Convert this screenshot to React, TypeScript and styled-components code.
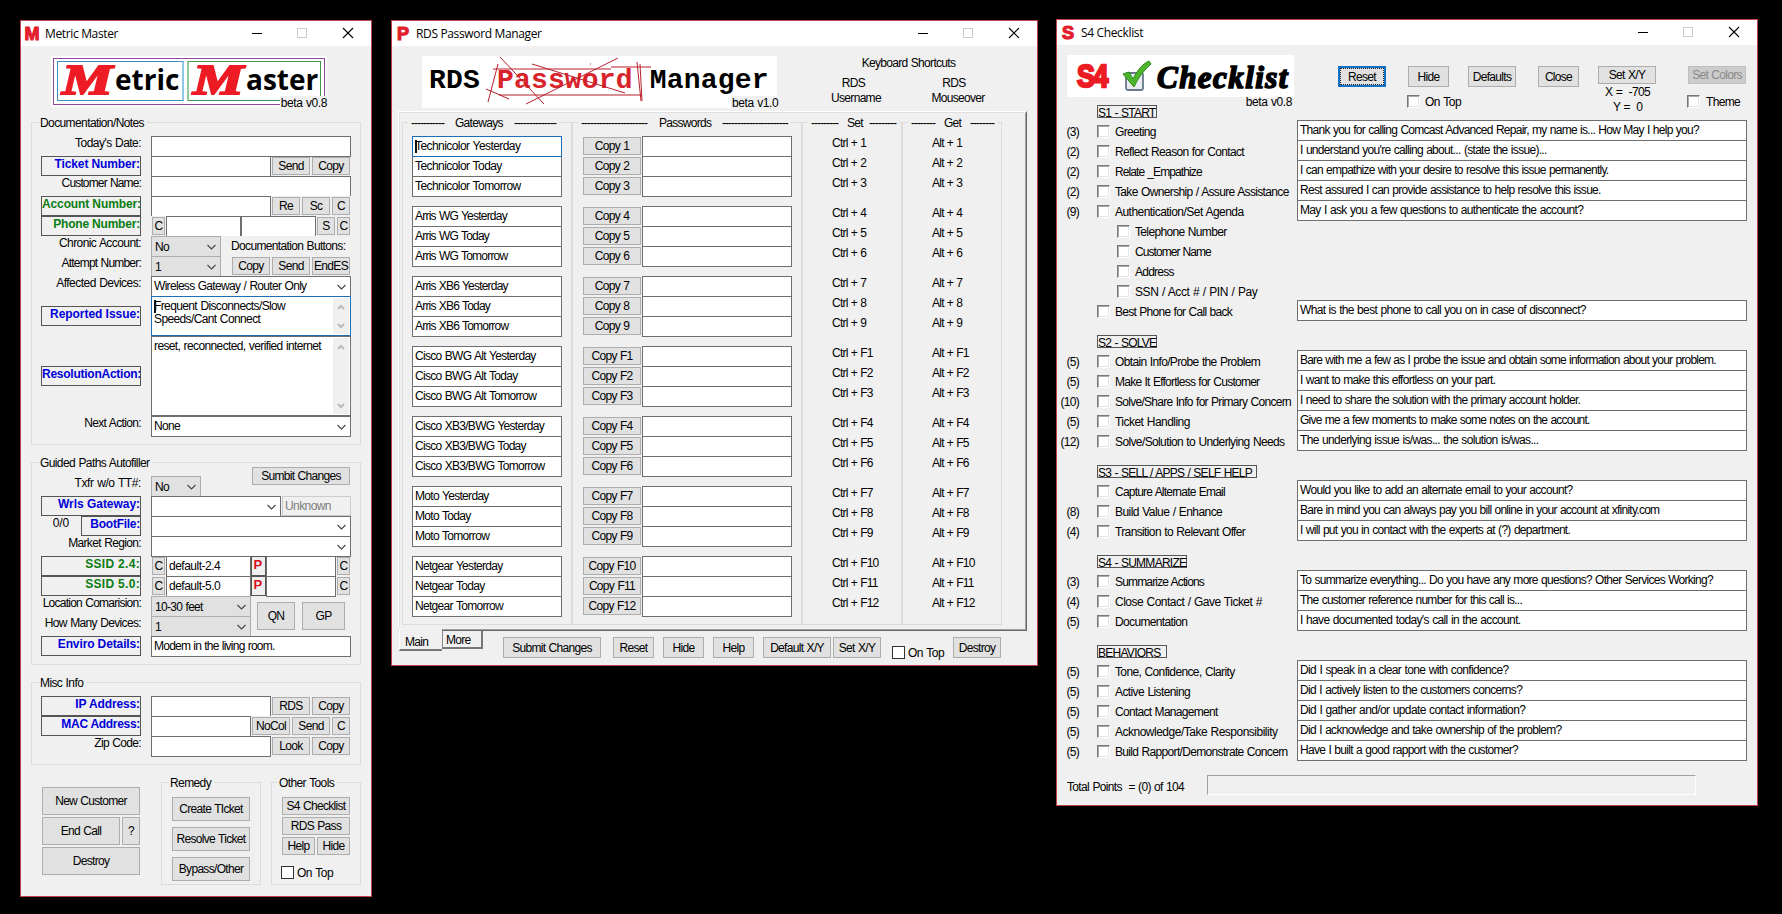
import React from 'react';
import styled, { createGlobalStyle, css } from 'styled-components';

/* Base tracking of the interface font; parts pass a small difference from it. */
const track = (n: number) => `${(n - 0.15).toFixed(2)}px`;

const GlobalStyle = createGlobalStyle`
  * { box-sizing: border-box; }
  html, body { margin: 0; padding: 0; background: #000; }
  body {
    font-family: "Liberation Sans", Arial, sans-serif;
    font-size: 12px;
    letter-spacing: ${track(-0.54)};
    word-spacing: 0.6px;
    color: #000;
    overflow: hidden;
  }
`;

/* ---------- window chrome ---------- */

const Desktop = styled.div`
  position: relative;
  width: 1782px;
  height: 914px;
  background: #000;
  overflow: hidden;
`;

const WindowFrame = styled.section<{ $x: number; $y: number; $w: number; $h: number }>`
  position: absolute;
  left: ${p => p.$x}px;
  top: ${p => p.$y}px;
  width: ${p => p.$w}px;
  height: ${p => p.$h}px;
  background: #f0f0f0;
  border: 1px solid #c4404a;
  display: flex;
  flex-direction: column;
`;

const TitleBar = styled.header`
  height: 25px;
  flex: none;
  background: #fff;
  display: flex;
  align-items: center;
  padding-left: 3px;
`;

const AppLetter = styled.span`
  width: 16px;
  font: bold 18px/24px "Liberation Sans", Arial, sans-serif;
  color: #e2202c;
  -webkit-text-stroke: 1.2px #e2202c;
  letter-spacing: 0;
  display: flex;
  justify-content: center;
`;

const TitleText = styled.h1`
  margin: 0 auto 0 5px;
  font: 400 12px/24px "Open Sans", "Noto Sans", sans-serif;
  letter-spacing: -0.35px;
  word-spacing: 0;
`;

const WindowButtons = styled.svg`
  width: 120px;
  height: 25px;
  margin-right: 1px;
  fill: none;
`;

function Window(props: {
  x: number; y: number; w: number; h: number; letter: string; title: string; children: React.ReactNode;
}) {
  return (
    <WindowFrame $x={props.x} $y={props.y} $w={props.w} $h={props.h}>
      <TitleBar>
        <AppLetter>{props.letter}</AppLetter>
        <TitleText>{props.title}</TitleText>
        <WindowButtons viewBox="0 0 120 25">
          <path d="M2 12.5h10" stroke="#000" />
          <rect x="47.5" y="7.5" width="9" height="9" stroke="#ccc" />
          <path d="M93 7l10 10M103 7l-10 10" stroke="#000" strokeWidth="1.1" />
        </WindowButtons>
      </TitleBar>
      {props.children}
    </WindowFrame>
  );
}

/* ---------- shared controls ---------- */

const Row = styled.div<{ $h?: number; $ml?: number; $mt?: number }>`
  display: flex;
  align-items: flex-start;
  height: ${p => p.$h ?? 20}px;
  margin-left: ${p => p.$ml ?? 0}px;
  margin-top: ${p => p.$mt ?? 0}px;
`;

const Column = styled.div<{ $w?: number; $ml?: number; $mt?: number; $gap?: number }>`
  display: flex;
  flex-direction: column;
  flex: none;
  width: ${p => (p.$w ? `${p.$w}px` : 'auto')};
  margin-left: ${p => p.$ml ?? 0}px;
  margin-top: ${p => p.$mt ?? 0}px;
  gap: ${p => p.$gap ?? 0}px;
`;

const Button = styled.button<{ $w: number; $h?: number; $ml?: number; $mt?: number }>`
  flex: none;
  width: ${p => p.$w}px;
  height: ${p => p.$h ?? 18}px;
  margin: ${p => p.$mt ?? 1}px 0 0 ${p => p.$ml ?? 0}px;
  padding: 0;
  background: #e1e1e1;
  border: 1px solid #adadad;
  font: inherit;
  line-height: 14px;
  letter-spacing: inherit;
  word-spacing: inherit;
  color: #000;
  display: flex;
  align-items: center;
  justify-content: center;
  white-space: pre;
  &:disabled { background: #ccc; border-color: #bfbfbf; color: #8a8a8a; }
`;

const FocusedButton = styled(Button)`
  border: 2px solid #0f72c4;
  outline: 1px dotted #222;
  outline-offset: -3px;
`;

const Label = styled.span<{ $w?: number; $ml?: number; $mt?: number; $ls?: number }>`
  flex: none;
  width: ${p => (p.$w ? `${p.$w}px` : 'auto')};
  margin: ${p => p.$mt ?? 0}px 0 0 ${p => p.$ml ?? 0}px;
  line-height: 14px;
  text-align: right;
  white-space: pre;
  letter-spacing: ${p => track(p.$ls ?? -0.5)};
`;

const Text = styled(Label)`
  text-align: left;
`;

const LinkLabel = styled.span<{ $color?: string; $w?: number; $ml?: number; $mt?: number; $ls?: number }>`
  flex: none;
  width: ${p => p.$w ?? 100}px;
  height: 20px;
  margin: ${p => p.$mt ?? 0}px 0 0 ${p => p.$ml ?? 0}px;
  border: 1px solid #555;
  font-weight: bold;
  line-height: 15px;
  text-align: right;
  white-space: pre;
  letter-spacing: ${p => p.$ls ?? -0.12}px;
  word-spacing: 0;
  color: ${p => p.$color ?? '#0000d8'};
`;

const PasswordMark = styled(LinkLabel)`
  width: 15px;
  padding-right: 3px;
  font-size: 13px;
  color: #d9101c;
`;

const green = '#0a7d12';

const fieldBase = css<{ $w: number; $ml?: number; $h?: number; $open?: boolean }>`
  flex: none;
  width: ${p => p.$w}px;
  height: ${p => p.$h ?? (p.$open ? 20 : 21)}px;
  margin-left: ${p => p.$ml ?? 0}px;
  background: #fff;
  border: 1px solid #6e6e6e;
  border-bottom-width: ${p => (p.$open ? 0 : 1)}px;
  white-space: pre;
`;

const Field = styled.div<{ $w: number; $ml?: number; $h?: number; $open?: boolean; $focus?: boolean; $ls?: number }>`
  ${fieldBase}
  ${p => p.$focus && css`border-color: #1b6fb8; position: relative;`}
  padding-left: 2px;
  line-height: 18px;
  letter-spacing: ${p => track(p.$ls ?? -0.54)};
`;

const DisabledField = styled(Field)`
  background: #f0f0f0;
  border-color: #ccc;
  color: #7d7d7d;
`;

const Caret = styled.i`
  position: absolute;
  left: 2px;
  top: 3px;
  width: 2px;
  height: 13px;
  background: #111;
`;

const ComboBox = styled.div<{ $w: number; $ml?: number; $h?: number; $open?: boolean; $gray?: boolean }>`
  ${fieldBase}
  ${p => p.$gray && css`background: #e1e1e1; border-color: #adadad;`}
  display: flex;
  align-items: center;
  justify-content: space-between;
  padding: 0 4px 0 ${p => (p.$gray ? 3 : 2)}px;
`;

const ComboValue = styled.span<{ $gray?: boolean }>`
  line-height: 14px;
  margin: ${p => (p.$gray ? '1px 0 0' : '0 0 1px')};
`;

const Chevron = styled.svg`
  width: 9px;
  height: 6px;
  fill: none;
  stroke: #444;
  stroke-width: 1.1;
`;

function Combo(props: { w: number; value?: string; gray?: boolean; open?: boolean }) {
  return (
    <ComboBox $w={props.w} $ml={10} $gray={props.gray} $open={props.open}>
      <ComboValue $gray={props.gray}>{props.value ?? ''}</ComboValue>
      <Chevron viewBox="0 0 9 6"><path d="M.5 1l4 4 4-4" /></Chevron>
    </ComboBox>
  );
}

const MemoBox = styled.div<{ $h: number; $focus?: boolean }>`
  position: relative;
  flex: none;
  width: 200px;
  height: ${p => p.$h}px;
  margin-left: 10px;
  background: #fff;
  border: 1px solid ${p => (p.$focus ? '#1b6fb8' : '#6e6e6e')};
  display: flex;
  justify-content: space-between;
  padding: 1px 1px 1px 2px;
  line-height: 13px;
  white-space: pre;
  letter-spacing: ${track(-0.47)};
`;

const MemoText = styled.span`
  padding-top: 2px;
`;

const ScrollBar = styled.div`
  width: 16px;
  background: #f0f0f0;
  display: flex;
  flex-direction: column;
  justify-content: space-between;
  align-items: center;
  padding: 6px 0 5px;
`;

const ScrollArrow = styled.svg`
  width: 8px;
  height: 7px;
  fill: none;
  stroke: #b9b9b9;
  stroke-width: 2;
`;

function Memo(props: { h: number; focus?: boolean; children: React.ReactNode }) {
  return (
    <MemoBox $h={props.h} $focus={props.focus}>
      {props.focus && <Caret />}
      <MemoText>{props.children}</MemoText>
      <ScrollBar>
        <ScrollArrow viewBox="0 0 8 7"><path d="M1 5l3-3 3 3" /></ScrollArrow>
        <ScrollArrow viewBox="0 0 8 7"><path d="M1 2l3 3 3-3" /></ScrollArrow>
      </ScrollBar>
    </MemoBox>
  );
}

const Group = styled.fieldset<{ $w: number; $h: number; $mt?: number; $ml?: number; $pl?: number; $pt?: number }>`
  flex: none;
  min-width: 0;
  width: ${p => p.$w}px;
  height: ${p => p.$h}px;
  margin: ${p => p.$mt ?? 0}px 0 0 ${p => p.$ml ?? 0}px;
  padding: ${p => p.$pt ?? 7}px 0 0 ${p => p.$pl ?? 9}px;
  border: 1px solid #dcdcdc;
`;

const Legend = styled.legend<{ $ml?: number }>`
  height: 13px;
  margin-left: ${p => p.$ml ?? -2}px;
  padding: 0 3px 0 1px;
  line-height: 14px;
  white-space: pre;
  letter-spacing: ${track(-0.45)};
`;

const Check = styled.i<{ $flat?: boolean; $ml?: number; $mt?: number }>`
  flex: none;
  width: 13px;
  height: 13px;
  margin: ${p => p.$mt ?? 0}px 0 0 ${p => p.$ml ?? 0}px;
  background: #fff;
  border: 1px solid #333;
  ${p => !p.$flat && css`
    border-color: #777 #fff #fff #777;
    box-shadow: inset 1px 1px 0 #aaa, inset -1px -1px 0 #e6e6e6;
  `}
`;

/* ---------- Metric Master ---------- */

const MetricBody = styled.div`
  padding: 10px 0 0 10px;
`;

const MetricLogo = styled.div`
  position: relative;
  width: 276px;
  height: 51px;
  margin-left: 20px;
  padding: 2px;
  background: #fff;
`;

const PurpleFrame = styled.div`
  display: flex;
  gap: 3px;
  width: 272px;
  height: 47px;
  padding: 2px 3px;
  border: 1px solid #8d4a9e;
`;

const LogoWord = styled.div<{ $w: number; $color: string; $edge: string; $side: 'left' | 'right' }>`
  display: flex;
  align-items: flex-start;
  width: ${p => p.$w}px;
  height: 40px;
  border: 1px solid ${p => p.$color};
  border-${p => p.$side}: 2px solid ${p => p.$edge};
  font: bold 28px/35px "Open Sans", "Noto Sans", sans-serif;
  letter-spacing: 0;
  color: #000;
`;

const BrushLetter = styled.span`
  flex: none;
  width: 57px;
  padding-left: 4px;
  font: italic bold 43px/36px "Liberation Serif", serif;
  color: #ed1c24;
  -webkit-text-stroke: 2px #ed1c24;
`;

const BrushInner = styled.span`
  display: inline-block;
  transform: scaleX(1.32);
  transform-origin: left center;
`;

const VersionTag = styled.span<{ $h?: number }>`
  position: absolute;
  right: 0;
  bottom: 0;
  height: ${p => p.$h ?? 11}px;
  line-height: 14px;
  padding-left: 1px;
  background: #f0f0f0;
  letter-spacing: ${track(-0.26)};
`;

function MetricMaster() {
  return (
    <Window x={20} y={20} w={352} h={877} letter="M" title="Metric Master">
      <MetricBody>
        <MetricLogo>
          <PurpleFrame>
            <LogoWord $w={127} $color="#3a8fbf" $edge="#8cc9e6" $side="right">
              <BrushLetter><BrushInner>M</BrushInner></BrushLetter>etric
            </LogoWord>
            <LogoWord $w={134} $color="#3f9a4f" $edge="#93c99c" $side="left">
              <BrushLetter><BrushInner>M</BrushInner></BrushLetter>aster
            </LogoWord>
          </PurpleFrame>
          <VersionTag>beta v0.8</VersionTag>
        </MetricLogo>

        <Group $w={330} $h={329} $mt={9}>
          <Legend>Documentation/Notes</Legend>
          <Row>
            <Label $w={100} $ls={-0.39}>Today's Date:</Label>
            <Field $w={200} $ml={10} />
          </Row>
          <Row>
            <LinkLabel>Ticket Number:</LinkLabel>
            <Field $w={120} $ml={10} />
            <Button $w={38} $ml={1}>Send</Button>
            <Button $w={38} $ml={2}>Copy</Button>
          </Row>
          <Row>
            <Label $w={100} $ls={-0.7}>Customer Name:</Label>
            <Field $w={200} $ml={10} $open />
          </Row>
          <Row>
            <LinkLabel $color={green}>Account Number:</LinkLabel>
            <Field $w={120} $ml={10} $open />
            <Button $w={28} $ml={1}>Re</Button>
            <Button $w={28} $ml={2}>Sc</Button>
            <Button $w={18} $ml={2}>C</Button>
          </Row>
          <Row>
            <LinkLabel $color={green} $ls={-0.2}>Phone Number:</LinkLabel>
            <Button $w={13} $ml={11}>C</Button>
            <Field $w={75} $ml={1} $open />
            <Field $w={75} $open />
            <Button $w={18} $ml={1}>S</Button>
            <Button $w={13} $ml={2}>C</Button>
          </Row>
          <Row>
            <Label $w={100} $ls={-0.43}>Chronic Account:</Label>
            <Combo w={70} value="No" gray open />
            <Text $ml={10} $mt={3}>Documentation Buttons:</Text>
          </Row>
          <Row>
            <Label $w={100} $ls={-0.64}>Attempt Number:</Label>
            <Combo w={70} value="1" gray open />
            <Button $w={38} $ml={11}>Copy</Button>
            <Button $w={38} $ml={2}>Send</Button>
            <Button $w={38} $ml={2}>EndES</Button>
          </Row>
          <Row>
            <Label $w={100} $ls={-0.38}>Affected Devices:</Label>
            <Combo w={200} value="Wireless Gateway / Router Only" />
          </Row>
          <Row $h={40}>
            <LinkLabel $mt={10} $ls={-0.05}>Reported Issue:</LinkLabel>
            <Memo h={40} focus>{'Frequent Disconnects/Slow\nSpeeds/Cant Connect'}</Memo>
          </Row>
          <Row $h={80}>
            <LinkLabel $mt={30} $ls={-0.25}>ResolutionAction:</LinkLabel>
            <Memo h={80}>reset, reconnected, verified internet</Memo>
          </Row>
          <Row>
            <Label $w={100}>Next Action:</Label>
            <Combo w={200} value="None" />
          </Row>
        </Group>

        <Group $w={330} $h={209} $mt={11}>
          <Legend>Guided Paths Autofiller</Legend>
          <Row>
            <Label $w={100} $ls={-0.25}>Txfr w/o TT#:</Label>
            <Combo w={50} value="No" gray open />
            <Button $w={98} $ml={51} $mt={-9}>Sumbit Changes</Button>
          </Row>
          <Row>
            <LinkLabel $ls={-0.04}>Wrls Gateway:</LinkLabel>
            <Combo w={130} />
            <DisabledField $w={69} $ml={1} $h={20} $ls={-0.44}>Unknown</DisabledField>
          </Row>
          <Row>
            <Label $w={28} $ls={0}>0/0</Label>
            <LinkLabel $w={60} $ml={12} $ls={-0.26}>BootFile:</LinkLabel>
            <Combo w={200} />
          </Row>
          <Row>
            <Label $w={100}>Market Region:</Label>
            <Combo w={200} />
          </Row>
          {['2.4', '5.0'].map(band => (
            <Row key={band}>
              <LinkLabel $color={green} $ls={0.3}>SSID {band}:</LinkLabel>
              <Button $w={13} $ml={11}>C</Button>
              <Field $w={85} $ml={1} $ls={-0.35}>default-{band}</Field>
              <PasswordMark $w={15}>P</PasswordMark>
              <Field $w={70} />
              <Button $w={13} $ml={1}>C</Button>
            </Row>
          ))}
          <Row $h={40}>
            <Column>
              <Row>
                <Label $w={100} $ls={-0.6}>Location Comarision:</Label>
                <Combo w={100} value="10-30 feet" gray open />
              </Row>
              <Row>
                <Label $w={100}>How Many Devices:</Label>
                <Combo w={100} value="1" gray open />
              </Row>
            </Column>
            <Button $w={38} $h={28} $ml={6} $mt={6}>QN</Button>
            <Button $w={43} $h={28} $ml={7} $mt={6}>GP</Button>
          </Row>
          <Row>
            <LinkLabel>Enviro Details:</LinkLabel>
            <Field $w={200} $ml={10} $ls={-0.62}>Modem in the living room.</Field>
          </Row>
        </Group>

        <Group $w={330} $h={89} $mt={11}>
          <Legend>Misc Info</Legend>
          <Row>
            <LinkLabel>IP Address:</LinkLabel>
            <Field $w={120} $ml={10} $open />
            <Button $w={38} $ml={1}>RDS</Button>
            <Button $w={38} $ml={2}>Copy</Button>
          </Row>
          <Row>
            <LinkLabel $ls={-0.3}>MAC Address:</LinkLabel>
            <Field $w={100} $ml={10} $open />
            <Button $w={38} $ml={1}>NoCol</Button>
            <Button $w={38} $ml={2}>Send</Button>
            <Button $w={18} $ml={2}>C</Button>
          </Row>
          <Row>
            <Label $w={100}>Zip Code:</Label>
            <Field $w={120} $ml={10} />
            <Button $w={38} $ml={1}>Look</Button>
            <Button $w={38} $ml={2}>Copy</Button>
          </Row>
        </Group>

        <Row $h={109} $mt={11}>
          <Column $ml={11} $mt={10} $w={98}>
            <Button $w={98} $h={28}>New Customer</Button>
            <Row $h={30} $mt={1}>
              <Button $w={78} $h={28}>End Call</Button>
              <Button $w={18} $h={28} $ml={2}>?</Button>
            </Row>
            <Button $w={98} $h={28}>Destroy</Button>
          </Column>
          <Group $w={100} $h={109} $ml={21} $pl={10} $pt={8}>
            <Legend $ml={-3}>Remedy</Legend>
            <Column $gap={6}>
              <Button $w={78} $h={24} $mt={0}>Create TIcket</Button>
              <Button $w={78} $h={24} $mt={0}>Resolve Ticket</Button>
              <Button $w={78} $h={24} $mt={0}>Bypass/Other</Button>
            </Column>
          </Group>
          <Group $w={90} $h={109} $ml={10} $pl={10}>
            <Legend $ml={-4}>Other Tools</Legend>
            <Row><Button $w={68}>S4 Checklist</Button></Row>
            <Row><Button $w={68}>RDS Pass</Button></Row>
            <Row>
              <Button $w={33}>Help</Button>
              <Button $w={33} $ml={2}>Hide</Button>
            </Row>
            <Row $mt={10}>
              <Check $flat $ml={-1} />
              <Text $ml={3} $ls={-0.32}>On Top</Text>
            </Row>
          </Group>
        </Row>
      </MetricBody>
    </Window>
  );
}

/* ---------- RDS Password Manager ---------- */

const PasswordLogo = styled.div`
  position: relative;
  width: 355px;
  height: 52px;
  padding: 7px 0 0 7px;
  background: #fff;
  font: bold 28px/36px "Liberation Mono", monospace;
  letter-spacing: 0.18px;
  word-spacing: 0;
  white-space: pre;
`;

const Red = styled.span`
  color: #d8232a;
`;

const Scribble = styled.svg`
  position: absolute;
  left: 0;
  top: 0;
  width: 355px;
  height: 52px;
  fill: none;
  stroke: #b8202a;
  stroke-width: 1;
`;

const LogoTag = styled(VersionTag)`
  width: 46px;
  height: 12px;
  font: 12px/14px "Liberation Sans", Arial, sans-serif;
  word-spacing: 0.6px;
`;

const Centered = styled.span<{ $w: number; $mt?: number; $ml?: number }>`
  width: ${p => p.$w}px;
  margin: ${p => p.$mt ?? 0}px 0 0 ${p => p.$ml ?? 0}px;
  line-height: 14px;
  text-align: center;
`;

const TabPanel = styled.div`
  display: flex;
  width: 629px;
  height: 520px;
  margin: 3px 0 0 6px;
  padding: 4px 0 0 3px;
  border: 1px solid #fff;
  border-right: 1px solid #696969;
  border-bottom: 1px solid #696969;
  box-shadow: inset 1px 1px 0 #e0e0e0, inset -1px -1px 0 #a0a0a0;
`;

const DashLegend = styled.legend<{ $ml: number }>`
  display: flex;
  height: 13px;
  margin-left: ${p => p.$ml}px;
  padding: 0 3px;
  line-height: 14px;
`;

const Dashes = styled.span`
  letter-spacing: -1px;
`;

const LegendTitle = styled.span<{ $l: number; $w: number; $r: number }>`
  width: ${p => p.$w}px;
  margin: 0 ${p => p.$r}px 0 ${p => p.$l}px;
`;

const Tab = styled.div<{ $w: number; $h: number; $active?: boolean }>`
  width: ${p => p.$w}px;
  height: ${p => p.$h}px;
  padding-left: ${p => (p.$active ? 5 : 3)}px;
  margin-top: ${p => (p.$active ? -2 : 0)}px;
  line-height: ${p => (p.$active ? 26 : 18)}px;
  background: #f0f0f0;
  border-left: 1px solid ${p => (p.$active ? '#fff' : '#888')};
  border-bottom: 2px solid #777;
  border-right: ${p => (p.$active ? 0 : 2)}px solid #777;
`;

const KeyText = styled.span`
  height: 20px;
  line-height: 14px;
  white-space: pre;
  letter-spacing: ${track(-0.62)};
`;

const gateways = ['Technicolor', 'Arris WG', 'Arris XB6', 'Cisco BWG Alt', 'Cisco XB3/BWG', 'Moto', 'Netgear'];
const gatewaySpacing = [-0.42, -0.63, -0.65, -0.54, -0.56, -0.54, -0.54];
const days = ['Yesterday', 'Today', 'Tomorrow'];
const keyName = (n: number) => (n < 9 ? String(n + 1) : `F${n - 8}`);

function Triples(props: { render: (n: number) => React.ReactNode }) {
  return (
    <Column $gap={10}>
      {gateways.map((g, i) => (
        <Column key={g}>
          {days.map((d, j) => <React.Fragment key={d}>{props.render(i * 3 + j)}</React.Fragment>)}
        </Column>
      ))}
    </Column>
  );
}

function PasswordManager() {
  return (
    <Window x={391} y={20} w={647} h={646} letter="P" title="RDS Password Manager">
      <Row $h={62}>
        <Column $ml={30} $mt={10}>
          <PasswordLogo>
            RDS <Red>Password</Red> Manager
            <Scribble viewBox="0 0 355 52">
              <path d="M78 1l44 47M110 8l93 29M196 2l-92 46M76 8l-10 38M71 13l118 0M189 11h40M64 33l23 10M77 39h143M215 6l4 39M218 8l2 37M168 8h1" />
            </Scribble>
            <LogoTag>beta v1.0</LogoTag>
          </PasswordLogo>
        </Column>
        <Column $ml={46} $mt={10} $w={190}>
          <Centered $w={171}>Keyboard Shortcuts</Centered>
          <Row $h={15} $mt={6}>
            <Centered $w={61}>RDS</Centered>
            <Centered $w={60} $ml={40}>RDS</Centered>
          </Row>
          <Row $h={15}>
            <Centered $w={66}>Username</Centered>
            <Centered $w={70} $ml={34}>Mouseover</Centered>
          </Row>
        </Column>
      </Row>

      <TabPanel>
        <Group $w={170} $h={509} $pl={9}>
          <DashLegend $ml={-4}>
            <Dashes>{'-'.repeat(11)}</Dashes>
            <LegendTitle $l={11} $w={47} $r={12}>Gateways</LegendTitle>
            <Dashes>{'-'.repeat(14)}</Dashes>
          </DashLegend>
          <Triples render={n => (
            <Row>
              <Field $w={150} $focus={n === 0} $ls={gatewaySpacing[Math.floor(n / 3)]}>
                {n === 0 && <Caret />}
                {gateways[Math.floor(n / 3)]} {days[n % 3]}
              </Field>
            </Row>
          )} />
        </Group>
        <Group $w={230} $h={509} $pl={10}>
          <DashLegend $ml={-5}>
            <Dashes>{'-'.repeat(22)}</Dashes>
            <LegendTitle $l={12} $w={50} $r={13}>Passwords</LegendTitle>
            <Dashes>{'-'.repeat(22)}</Dashes>
          </DashLegend>
          <Triples render={n => (
            <Row>
              <Button $w={58}>Copy {keyName(n)}</Button>
              <Field $w={150} $ml={1} />
            </Row>
          )} />
        </Group>
        <Group $w={100} $h={509} $pl={29}>
          <DashLegend $ml={-24}>
            <Dashes>{'-'.repeat(9)}</Dashes>
            <LegendTitle $l={9} $w={15} $r={7}>Set</LegendTitle>
            <Dashes>{'-'.repeat(9)}</Dashes>
          </DashLegend>
          <Triples render={n => <KeyText>Ctrl + {keyName(n)}</KeyText>} />
        </Group>
        <Group $w={100} $h={509} $pl={29}>
          <DashLegend $ml={-24}>
            <Dashes>{'-'.repeat(8)}</Dashes>
            <LegendTitle $l={9} $w={16} $r={10}>Get</LegendTitle>
            <Dashes>{'-'.repeat(8)}</Dashes>
          </DashLegend>
          <Triples render={n => <KeyText>Alt + {keyName(n)}</KeyText>} />
        </Group>
      </TabPanel>

      <Row $h={30} $ml={7}>
        <Tab $w={43} $h={22} $active>Main</Tab>
        <Tab $w={41} $h={18}>More</Tab>
        <Button $w={98} $h={21} $ml={20} $mt={6}>Submit Changes</Button>
        <Button $w={41} $h={21} $ml={12} $mt={6}>Reset</Button>
        <Button $w={41} $h={21} $ml={9} $mt={6}>Hide</Button>
        <Button $w={41} $h={21} $ml={9} $mt={6}>Help</Button>
        <Button $w={68} $h={21} $ml={9} $mt={6}>Default X/Y</Button>
        <Button $w={48} $h={21} $ml={2} $mt={6}>Set X/Y</Button>
        <Check $flat $ml={11} $mt={15} />
        <Text $ml={3} $mt={15} $w={35} $ls={-0.32}>On Top</Text>
        <Button $w={48} $h={21} $ml={10} $mt={6}>Destroy</Button>
      </Row>
    </Window>
  );
}

/* ---------- S4 Checklist ---------- */

const ChecklistHeader = styled.div`
  display: flex;
  align-items: flex-start;
  height: 60px;
  padding: 10px 0 0 10px;
`;

const ChecklistLogo = styled.div`
  display: flex;
  align-items: flex-start;
  width: 227px;
  height: 42px;
  padding-left: 10px;
  background: #fff;
`;

const S4Mark = styled.span`
  width: 43px;
  font: bold 31px/43px "Liberation Sans", Arial, sans-serif;
  letter-spacing: -1.5px;
  color: #ed1c24;
  -webkit-text-stroke: 2.4px #ed1c24;
  transform: scaleX(0.86);
  transform-origin: left center;
`;

const TickIcon = styled.svg`
  width: 34px;
  height: 34px;
  margin-top: 5px;
  overflow: visible;
`;

const ChecklistWord = styled.span`
  margin-left: 3px;
  font: italic bold 31px/45px "Liberation Serif", serif;
  letter-spacing: 1.45px;
  -webkit-text-stroke: 1.6px #000;
`;

const Heading = styled.h2<{ $w: number }>`
  width: ${p => p.$w}px;
  height: 13px;
  margin: 0 0 2px 40px;
  border: 1px solid #555;
  font: inherit;
  line-height: 14px;
  white-space: pre;
  letter-spacing: ${track(-0.58)};
`;

const Section = styled.section`
  margin-bottom: 15px;
`;

const Points = styled.span`
  width: 22px;
  margin: 5px 18px 0 -10px;
  line-height: 14px;
  text-align: right;
`;

const Progress = styled.div`
  width: 489px;
  height: 20px;
  border: 1px solid #a0a0a0;
  border-right-color: #fff;
  border-bottom-color: #fff;
`;

/* ls and scriptLs are the tracking of the label and of its script line. */
type Item = { points?: number; label: string; ls?: number; script?: string; scriptLs?: number; sub?: boolean };

const sections: { title: string; width: number; items: Item[] }[] = [
  {
    title: 'S1 - START', width: 60, items: [
      { points: 3, label: 'Greeting', script: 'Thank you for calling Comcast Advanced Repair, my name is... How May I help you?', scriptLs: -0.58 },
      { points: 2, label: 'Reflect Reason for Contact', script: "I understand you're calling about... (state the issue)..." },
      { points: 2, label: 'Relate _Empathize', ls: -0.75, script: 'I can empathize with your desire to resolve this issue permanently.', scriptLs: -0.6 },
      { points: 2, label: 'Take Ownership / Assure Assistance', script: 'Rest assured I can provide assistance to help resolve this issue.', scriptLs: -0.56 },
      { points: 9, label: 'Authentication/Set Agenda', ls: -0.39, script: 'May I ask you a few questions to authenticate the account?', scriptLs: -0.5 },
      { label: 'Telephone Number', sub: true },
      { label: 'Customer Name', ls: -0.78, sub: true },
      { label: 'Address', ls: -0.62, sub: true },
      { label: 'SSN / Acct # / PIN / Pay', ls: -0.26, sub: true },
      { label: 'Best Phone for Call back', ls: -0.58, script: 'What is the best phone to call you on in case of disconnect?', scriptLs: -0.52 },
    ],
  },
  {
    title: 'S2 - SOLVE', width: 60, items: [
      { points: 5, label: 'Obtain Info/Probe the Problem', script: 'Bare with me a few as I probe the issue and obtain some information about your problem.', scriptLs: -0.64 },
      { points: 5, label: 'Make It Effortless for Customer', ls: -0.6, script: 'I want to make this effortless on your part.', scriptLs: -0.58 },
      { points: 10, label: 'Solve/Share Info for Primary Concern', ls: -0.57, script: 'I need to share the solution with the primary account holder.', scriptLs: -0.56 },
      { points: 5, label: 'Ticket Handling', ls: -0.38, script: 'Give me a few moments to make some notes on the account.', scriptLs: -0.62 },
      { points: 12, label: 'Solve/Solution to Underlying Needs', ls: -0.47, script: 'The underlying issue is/was... the solution is/was...', scriptLs: -0.49 },
    ],
  },
  {
    title: 'S3 - SELL / APPS / SELF HELP', width: 160, items: [
      { label: 'Capture Alternate Email', ls: -0.64, script: 'Would you like to add an alternate email to your account?', scriptLs: -0.53 },
      { points: 8, label: 'Build Value / Enhance', ls: -0.41, script: 'Bare in mind you can always pay you bill online in your account at xfinity.com', scriptLs: -0.59 },
      { points: 4, label: 'Transition to Relevant Offer', ls: -0.48, script: 'I will put you in contact with the experts at (?) department.', scriptLs: -0.56 },
    ],
  },
  {
    title: 'S4 - SUMMARIZE', width: 90, items: [
      { points: 3, label: 'Summarize Actions', ls: -0.69, script: 'To summarize everything... Do you have any more questions? Other Services Working?', scriptLs: -0.57 },
      { points: 4, label: 'Close Contact / Gave Ticket #', ls: -0.36, script: 'The customer reference number for this call is...', scriptLs: -0.59 },
      { points: 5, label: 'Documentation', script: "I have documented today's call in the account.", scriptLs: -0.49 },
    ],
  },
  {
    title: 'BEHAVIORS', width: 70, items: [
      { points: 5, label: 'Tone, Confidence, Clarity', ls: -0.48, script: 'Did I speak in a clear tone with confidence?', scriptLs: -0.48 },
      { points: 5, label: 'Active Listening', ls: -0.45, script: 'Did I actively listen to the customers concerns?', scriptLs: -0.52 },
      { points: 5, label: 'Contact Management', ls: -0.56, script: 'Did I gather and/or update contact information?', scriptLs: -0.47 },
      { points: 5, label: 'Acknowledge/Take Responsibility', ls: -0.35, script: 'Did I acknowledge and take ownership of the problem?', scriptLs: -0.53 },
      { points: 5, label: 'Build Rapport/Demonstrate Concern', ls: -0.52, script: 'Have I built a good rapport with the customer?', scriptLs: -0.55 },
    ],
  },
];

function ChecklistRow({ item }: { item: Item }) {
  return (
    <Row $ml={10}>
      <Points>{item.points ? `(${item.points})` : ''}</Points>
      <Check $mt={5} $ml={item.sub ? 20 : 0} />
      <Text $mt={5} $ml={5} $w={item.sub ? 162 : 182} $ls={item.ls}>{item.label}</Text>
      {item.script && <Field $w={450} $ls={item.scriptLs}>{item.script}</Field>}
    </Row>
  );
}

function S4Checklist() {
  return (
    <Window x={1056} y={19} w={702} h={787} letter="S" title="S4 Checklist">
      <ChecklistHeader>
        <Column $w={227}>
          <ChecklistLogo>
            <S4Mark>S4</S4Mark>
            <TickIcon viewBox="0 0 34 34">
              <rect x="6" y="13" width="17" height="17" rx="2" fill="#e9edf2" stroke="#66788a" strokeWidth="1.8" />
              <path d="M3 14l6-2 4 7C17 11 22 4 29 1l2 3C24 10 18 18 14 27z" fill="#4db52c" stroke="#2d8a1c" strokeWidth="1" />
            </TickIcon>
            <ChecklistWord>Checklist</ChecklistWord>
          </ChecklistLogo>
          <Label $mt={-2} $w={225} $ls={-0.26}>beta v0.8</Label>
        </Column>
        <FocusedButton $w={48} $h={21} $ml={44} $mt={11}>Reset</FocusedButton>
        <Column $ml={21} $mt={11}>
          <Button $w={41} $h={21} $ml={1} $mt={0}>Hide</Button>
          <Row $h={13} $mt={8}>
            <Check />
            <Text $ml={5} $w={37} $ls={-0.32}>On Top</Text>
          </Row>
        </Column>
        <Button $w={48} $h={21} $mt={11} $ml={6}>Defaults</Button>
        <Button $w={41} $h={21} $ml={22} $mt={11}>Close</Button>
        <Column $ml={19} $mt={11} $w={58}>
          <Button $w={58} $mt={0}>Set X/Y</Button>
          <Text $ml={7} $mt={1}>X =  -705</Text>
          <Text $ml={15} $mt={1}>Y =  0</Text>
        </Column>
        <Column $ml={31} $mt={11}>
          <Button $w={58} $mt={0} $ml={1} disabled>Set Colors</Button>
          <Row $h={13} $mt={11}>
            <Check />
            <Text $ml={6}>Theme</Text>
          </Row>
        </Column>
      </ChecklistHeader>
      {sections.map(s => (
        <Section key={s.title}>
          <Heading $w={s.width}>{s.title}</Heading>
          {s.items.map(item => <ChecklistRow key={item.label} item={item} />)}
        </Section>
      ))}
      <Row $ml={10}>
        <Text $w={140} $mt={5}>Total Points  = (0) of 104</Text>
        <Progress />
      </Row>
    </Window>
  );
}

export default function App() {
  return (
    <Desktop>
      <GlobalStyle />
      <MetricMaster />
      <PasswordManager />
      <S4Checklist />
    </Desktop>
  );
}
